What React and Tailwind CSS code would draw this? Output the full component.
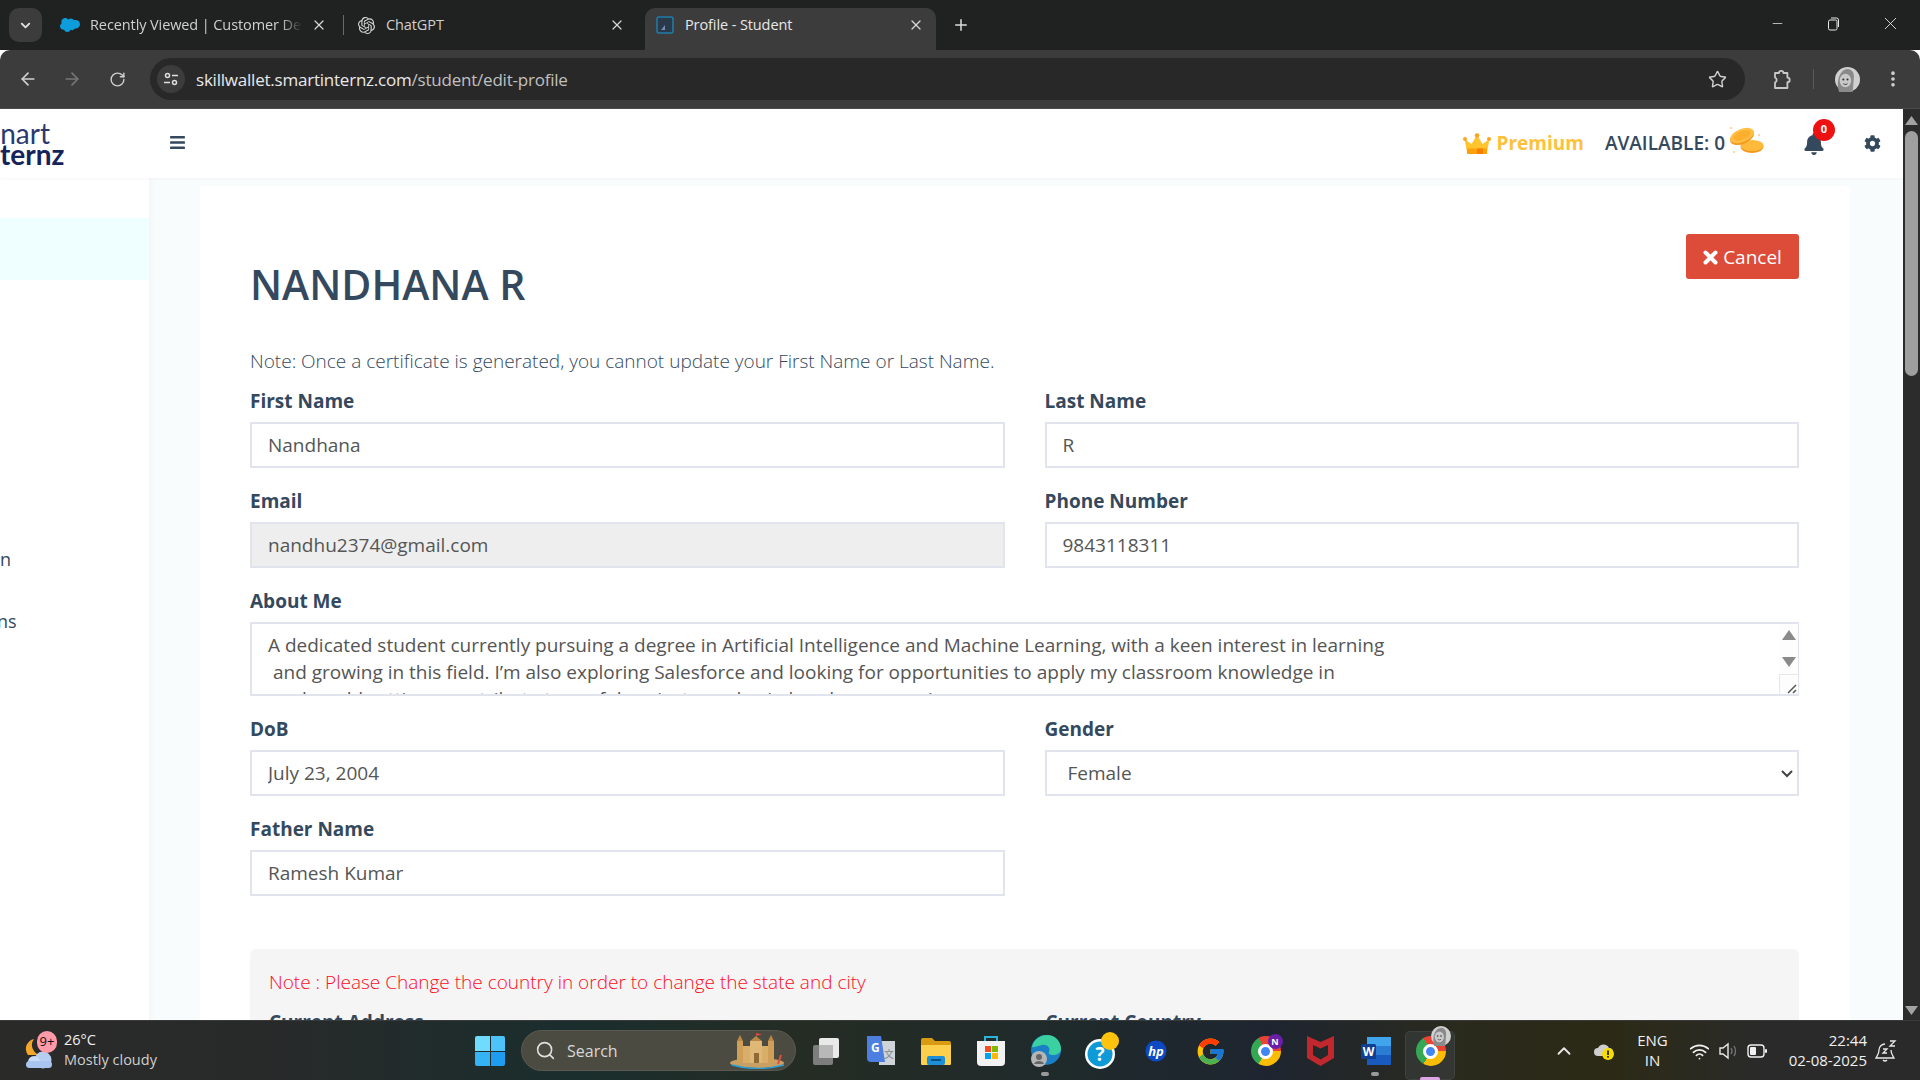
import React from "react";
import { FaBars, FaBell, FaCog } from "react-icons/fa";
import { FcGoogle } from "react-icons/fc";
import { SiOpenai, SiSalesforce } from "react-icons/si";
import { ArrowLeft, ArrowRight, RotateCw, Star, EllipsisVertical, X, Plus, ChevronDown, ChevronUp, Search, Wifi, Minus } from "lucide-react";

const Avatar = ({ s = 24 }) => (
  <svg width={s} height={s} viewBox="0 0 24 24">
    <circle cx="12" cy="12" r="12" fill="#d0d0d0" />
    <path d="M4 24C1 14 4 3 12 2c5 0 7 5 6 10l-1 12z" fill="#8a8a8a" />
    <ellipse cx="10" cy="13" rx="5.5" ry="6.5" fill="#c9c9c9" />
    <circle cx="8" cy="12" r="1" fill="#333" />
    <circle cx="12" cy="12" r="1" fill="#333" />
    <path d="M8 16q2 1.5 4 0" stroke="#555" fill="none" />
  </svg>
);

const Tab = ({ icon, text, active, w, fade, pl, gap, pr }) => (
  <div className={`flex items-center shrink-0 h-[42px] pb-[8px] mt-[8px] ${w} ${pl} ${pr} ${active ? "bg-[#3c3c3c] rounded-t-[10px]" : ""}`}>
    <span className="w-[20px] h-[20px] flex items-center justify-center shrink-0">{icon}</span>
    <span className={`ml-[10px] flex-1 min-w-0 overflow-hidden whitespace-nowrap text-[14.5px] tracking-[-0.1px] ${active ? "text-[#e8e8e8]" : "text-[#cfcfcf]"} ${fade ? "[mask-image:linear-gradient(to_right,black_90%,transparent)]" : ""}`}>{text}</span>
    <X size={16} className={`text-[#d8d8d8] shrink-0 ${gap}`} strokeWidth={1.8} />
  </div>
);

const TabStrip = () => (
  <div className="h-[50px] bg-[#202221] flex items-start shrink-0">
    <div className="ml-[9px] mt-[8px] w-[33px] h-[34px] rounded-[10px] bg-[#3c3c3c] flex items-center justify-center">
      <ChevronDown size={15} strokeWidth={3} className="text-[#e0e0e0]" />
    </div>
    <div className="ml-[5px] w-[296px] shrink-0"><Tab w="w-[296px]" pl="pl-[13px]" pr="pr-[16px]" gap="ml-[9px]" fade text="Recently Viewed | Customer De" icon={<SiSalesforce size={20} className="text-[#0d9dda]" />} /></div>
    <div className="w-[1px] h-[20px] mt-[15px] bg-[#6a6a6a] shrink-0" />
    <Tab w="w-[301px]" pl="pl-[12px]" pr="pr-[20px]" gap="ml-[6px]" text="ChatGPT" icon={<SiOpenai size={17} className="text-[#d8d8d8]" />} />
    <Tab active w="w-[291px]" pl="pl-[10px]" pr="pr-[12px]" gap="ml-[6px]" text="Profile - Student" icon={
      <svg width="20" height="20" viewBox="0 0 20 20"><rect x="2" y="2" width="16" height="16" rx="2" fill="#2b3a4a" stroke="#1f7ea8" strokeWidth="1.5" /><path d="M6 15l4-5v5z" fill="#6f8fae" /></svg>
    } />
    <Plus size={18} className="text-[#dcdcdc] ml-[16px] mt-[16px] shrink-0" strokeWidth={2} />
    <div className="flex-1" />
    <div className="flex items-center text-[#e8e8e8] h-[50px] pb-[3px] pr-[19px]">
      <Minus size={15} strokeWidth={1.2} />
      <svg width="13" height="14" viewBox="0 0 13 14" className="ml-[42px]" fill="none" stroke="#e8e8e8"><rect x="1.5" y="3" width="8.5" height="10" rx="1.5" /><path d="M4 1h5.5a2 2 0 0 1 2 2v7" /></svg>
      <X size={21} strokeWidth={1} className="ml-[40px]" />
    </div>
  </div>
);

const ToolBar = () => (
  <div className="h-[59px] bg-[#3c3c3c] rounded-t-[10px] flex items-center shrink-0 border-b border-[#4a4a4a]">
    <ArrowLeft size={20} className="ml-[18px] text-[#d0d0d0]" strokeWidth={2} />
    <ArrowRight size={20} className="ml-[24px] text-[#777]" strokeWidth={2} />
    <RotateCw size={17} className="ml-[27px] text-[#d0d0d0]" strokeWidth={2} />
    <div className="ml-[24px] w-[1595px] h-[42px] bg-[#282828] rounded-full flex items-center pl-[7px] pr-[18px]">
      <div className="w-[28px] h-[28px] rounded-full bg-[#3c3c3c] flex items-center justify-center">
        <svg width="16" height="16" viewBox="0 0 16 16" fill="none" stroke="#dedede" strokeWidth="1.5"><circle cx="4.5" cy="4.5" r="2" /><path d="M9 4.5h6M1 11.5h6" /><circle cx="11.5" cy="11.5" r="2" /></svg>
      </div>
      <span className="ml-[11px] mt-[1px] text-[17px] tracking-[-0.22px] text-[#e8e8e8]">skillwallet.smartinternz.com<span className="text-[#c0c0c0]">/student/edit-profile</span></span>
      <Star size={19} className="ml-auto text-[#d0d0d0]" strokeWidth={1.8} />
    </div>
    <svg width="24" height="24" viewBox="0 0 24 24" fill="none" stroke="#c8c8c8" strokeWidth="1.8" strokeLinejoin="round" className="ml-[24px]">
      <path d="M6 6h4a2.2 2.2 0 0 1 4.4 0h4v4.6a2.3 2.3 0 0 1 0 4.6V21H6v-5.5a2.7 2.7 0 0 0 0-5z" />
    </svg>
    <div className="ml-[20px] w-[1px] h-[20px] bg-[#5a5a5a]" />
    <div className="ml-[21px]"><Avatar s={25} /></div>
    <EllipsisVertical size={20} className="ml-[23px] text-[#d0d0d0]" strokeWidth={2.4} />
  </div>
);

const Crown = () => (
  <svg width="28" height="22" viewBox="0 0 28 22">
    <path d="M4 19L1.5 6l7 5L14 2l5.5 9 7-5L24 19z" fill="#ffc52f" />
    <path d="M4 15.5h20L24 21H4z" fill="#ff9f0a" />
    <path d="M14 15.5h6V21h-6z" fill="#f77f00" />
    <circle cx="2" cy="6" r="2" fill="#ffa41c" /><circle cx="14" cy="2.5" r="2.3" fill="#ffa41c" /><circle cx="26" cy="6" r="2" fill="#ffa41c" />
  </svg>
);

const Coins = () => (
  <svg width="36" height="30" viewBox="0 0 36 30">
    <ellipse cx="24" cy="21" rx="11.5" ry="6" fill="#f29a1f" />
    <ellipse cx="24" cy="19.5" rx="11.5" ry="5.5" fill="#ffb93b" />
    <ellipse cx="14" cy="11" rx="12.5" ry="7" transform="rotate(-22 14 11)" fill="#f29a1f" />
    <ellipse cx="14" cy="9.5" rx="12.5" ry="6.5" transform="rotate(-22 14 9.5)" fill="#ffbf45" />
    <ellipse cx="14" cy="9.5" rx="9" ry="4.2" transform="rotate(-22 14 9.5)" fill="#fdae2d" />
    <circle cx="3" cy="2" r="1" fill="#f8c98a" /><circle cx="31" cy="9" r="1" fill="#f8c98a" /><circle cx="6" cy="26" r="1" fill="#f8c98a" />
  </svg>
);

const Header = () => (
  <div className="h-[69px] bg-white flex items-center shrink-0 relative z-10 shadow-[0_1px_3px_rgba(0,0,0,0.03)]">
    <div className="w-[64px] shrink-0 overflow-hidden font-['Lato',sans-serif] text-[#16235a] text-[28px] leading-[21px] text-right">
      <div className="font-normal text-[#2a3a70] pr-[14px]">nart</div>
      <div className="font-bold">ternz</div>
    </div>
    <FaBars size={17} className="ml-[105px] text-[#34495e] -mt-[3px]" />
    <div className="flex-1" />
    <Crown />
    <span className="ml-[6px] text-[19px] font-bold text-[#fdc13c] font-['Open_Sans',sans-serif]">Premium</span>
    <span className="ml-[21px] text-[19px] font-semibold text-[#34495e] font-['Open_Sans',sans-serif]">AVAILABLE: 0</span>
    <span className="ml-[3px] -mt-[5px]"><Coins /></span>
    <span className="ml-[39px] relative">
      <FaBell size={22} className="text-[#34495e]" />
      <span className="absolute -top-[14px] left-[10px] w-[22px] h-[22px] rounded-full bg-[#ee1111] text-white text-[11px] font-bold flex items-center justify-center font-['Open_Sans',sans-serif]">0</span>
    </span>
    <FaCog size={17} className="ml-[39px] mr-[22px] text-[#34495e]" />
  </div>
);

const inputBase = "w-full h-[46px] border-2 border-[#e1e4ec] pl-[16px] text-[19px] text-[#555] outline-none";

const Label = ({ children }) => (
  <div className="h-[32px] text-[19px] leading-[23px] font-bold text-[#34495e]">{children}</div>
);

const Field = ({ label, value, disabled }) => (
  <div className="mb-[22px]">
    <Label>{label}</Label>
    <input readOnly defaultValue={value} className={`${inputBase} ${disabled ? "bg-[#eeeeee]" : "bg-white"}`} />
  </div>
);

const about = "A dedicated student currently pursuing a degree in Artificial Intelligence and Machine Learning, with a keen interest in learning\n and growing in this field. I’m also exploring Salesforce and looking for opportunities to apply my classroom knowledge in\n real-world settings, contribute to useful projects, and gain hands-on experience.";

const Card = () => (
  <div className="ml-[51px] mt-[8px] w-[1650px] bg-white px-[50px] font-['Open_Sans',sans-serif] pb-[40px]">
    <div className="flex justify-between items-start pt-[48px] h-[148px] w-[1549px]">
      <h1 className="text-[41px] leading-[56px] mt-[22px] font-semibold text-[#34495e]">NANDHANA R</h1>
      <button className="w-[113px] h-[45px] pt-[1px] bg-[#dd4b39] rounded-[3px] text-white text-[19px] flex items-center justify-center">
        <svg width="15" height="15" viewBox="0 0 15 15" className="mr-[5px] mt-[1px]"><path d="M2.5 2.5l10 10M12.5 2.5l-10 10" stroke="#fff" strokeWidth="4" strokeLinecap="round" /></svg>Cancel
      </button>
    </div>
    <p className="text-[19px] leading-[26px] font-light text-[#34495e] mt-[14px] h-[42px]">Note: Once a certificate is generated, you cannot update your First Name or Last Name.</p>
    <div className="grid grid-cols-2 gap-x-[40px] w-[1549px]">
      <Field label="First Name" value="Nandhana" />
      <Field label="Last Name" value="R" />
      <Field label="Email" value="nandhu2374@gmail.com" disabled />
      <Field label="Phone Number" value="9843118311" />
      <div className="col-span-2 mb-[22px]">
        <Label>About Me</Label>
        <div className="relative h-[74px]">
          <textarea readOnly defaultValue={about} className="w-full h-full block resize-none overflow-hidden border-2 border-[#e1e4ec] pl-[16px] pt-[8px] text-[19px] leading-[27px] text-[#555] outline-none whitespace-pre" />
          <div className="absolute right-[1px] top-[2px] bottom-[2px] w-[19px] bg-[#fdfdfd] flex flex-col items-center">
            <svg width="14" height="10" viewBox="0 0 14 10" className="mt-[6px]"><path d="M7 0l7 10H0z" fill="#8a8a8a" /></svg>
            <svg width="14" height="10" viewBox="0 0 14 10" className="mt-[17px]"><path d="M0 0h14L7 10z" fill="#8a8a8a" /></svg>
            <div className="mt-auto w-[19px] h-[20px] border-t border-l border-[#e8e8e8] flex items-end justify-end">
              <svg width="11" height="11" viewBox="0 0 11 11" stroke="#555" strokeWidth="1.5"><path d="M1 10L9 2M6 10l3-3" /></svg>
            </div>
          </div>
        </div>
      </div>
      <Field label="DoB" value="July 23, 2004" />
      <div className="mb-[22px]">
        <Label>Gender</Label>
        <div className="relative">
          <select defaultValue="Female" className="w-full h-[46px] border-2 border-[#e1e4ec] pl-[21px] text-[19px] text-[#555] outline-none bg-white appearance-none">
            <option>Female</option>
            <option>Male</option>
          </select>
          <svg width="12" height="8" viewBox="0 0 12 8" fill="none" stroke="#444" strokeWidth="2" className="absolute right-[6px] top-[20px] pointer-events-none"><path d="M1 1l5 5 5-5" /></svg>
        </div>
      </div>
      <Field label="Father Name" value="Ramesh Kumar" />
    </div>
    <div className="mt-[31px] w-[1549px] bg-[#f5f5f5] rounded-[6px] px-[19px] pt-[20px] h-[200px]">
      <p className="text-[19px] leading-[26px] font-light text-[#ff0d1d]">Note : Please Change the country in order to change the state and city</p>
      <div className="grid grid-cols-2 gap-x-[40px] mt-[13px] text-[19px] font-bold text-[#34495e]">
        <div>Current Address</div>
        <div className="pl-[1px]">Current Country</div>
      </div>
    </div>
  </div>
);

const Sidebar = () => (
  <div className="w-[149px] shrink-0 bg-white pt-[40px] font-['Open_Sans',sans-serif] text-[18px] text-[#34495e]">
    <div className="h-[62px] bg-[#effeff]" />
    <div className="h-[248px]" />
    <div className="h-[62px] leading-[62px]">n</div>
    <div className="h-[62px] leading-[62px] -translate-x-[3px] overflow-hidden">ns</div>
  </div>
);

const Scrollbar = () => (
  <div className="w-[17px] shrink-0 bg-[#2c2c2c] flex flex-col items-center pt-[7px] relative z-20">
    <svg width="13" height="9" viewBox="0 0 13 9"><path d="M6.5 0L13 9H0z" fill="#a3a3a3" /></svg>
    <div className="mt-[6px] w-[13px] h-[245px] rounded-full bg-[#9f9f9f]" />
    <div className="flex-1" />
    <svg width="13" height="9" viewBox="0 0 13 9" className="mb-[5px]"><path d="M0 0h13L6.5 9z" fill="#a3a3a3" /></svg>
  </div>
);

const ChromeIcon = ({ children }) => (
  <span className="relative w-[30px] h-[30px] rounded-full bg-[conic-gradient(#ea4335_-30deg,#ea4335_90deg,#fbbc04_90deg,#fbbc04_210deg,#34a853_210deg,#34a853_330deg,#ea4335_330deg)] flex items-center justify-center">
    <span className="w-[15px] h-[15px] rounded-full bg-[#4285f4] border-[3px] border-white" />
    {children}
  </span>
);

const Cell = ({ children, dot }) => (
  <div className="w-[55px] h-[60px] shrink-0 flex items-center justify-center relative">
    {children}
    {dot && <span className="absolute bottom-[5px] left-[23px] w-[8px] h-[4px] rounded-full bg-[#9a9a9a]" />}
  </div>
);

const TaskIcons = () => (
  <div className="flex ml-[2px]">
    <Cell>
      <svg width="30" height="30" viewBox="0 0 30 30"><rect x="8" y="2" width="20" height="20" rx="2" fill="#e9e9e9" /><rect x="2" y="9" width="20" height="20" rx="2" fill="#7d7d7d" /><rect x="8" y="9" width="14" height="13" fill="#b8b8b8" /></svg>
    </Cell>
    <Cell>
      <svg width="30" height="32" viewBox="0 0 30 32"><path d="M13 6h16v24H13z" fill="#cfd4d9" /><path d="M1 1h14l4 26H5a4 4 0 0 1-4-4z" fill="#4d7fe0" /><text x="5" y="17" fill="#fff" fontSize="12" fontWeight="700" fontFamily="Open Sans">G</text><text x="18" y="23" fill="#7b8790" fontSize="10" fontFamily="Noto Sans CJK SC">文</text></svg>
    </Cell>
    <Cell>
      <svg width="30" height="30" viewBox="0 0 30 30"><path d="M0 4a2 2 0 0 1 2-2h9l3 3h14a2 2 0 0 1 2 2v3H0z" fill="#d99b12" /><path d="M0 9h30v19a1 1 0 0 1-1 1H1a1 1 0 0 1-1-1z" fill="#fcd04c" /><rect x="6" y="20" width="18" height="9" rx="2" fill="#1c8fd6" /><rect x="10" y="23" width="10" height="2" fill="#0b4f86" /></svg>
    </Cell>
    <Cell>
      <svg width="30" height="32" viewBox="0 0 30 32"><path d="M9 6V2h12v4" fill="none" stroke="#2bb3d9" strokeWidth="2" /><path d="M1 6h28v21a4 4 0 0 1-4 4H5a4 4 0 0 1-4-4z" fill="#f2f2f2" /><rect x="9" y="11" width="6" height="6" fill="#f25022" /><rect x="16" y="11" width="6" height="6" fill="#7fba00" /><rect x="9" y="18" width="6" height="6" fill="#00a4ef" /><rect x="16" y="18" width="6" height="6" fill="#ffb900" /></svg>
    </Cell>
    <Cell dot>
      <svg width="32" height="34" viewBox="0 0 32 34"><circle cx="16" cy="16" r="15" fill="#1a7fc4" /><path d="M2 13C4 4 12 1 17 1c8 0 14 6 14 14 0 4-4 6-8 6-3 0-5-1-4-3 2-4-2-8-7-7-5 1-9 3-10 2z" fill="#3ad0a0" /><circle cx="9" cy="25" r="8" fill="#b5b5b5" /><circle cx="9" cy="23" r="3" fill="#666" /><path d="M4 30c1-4 9-4 10 0z" fill="#666" /></svg>
    </Cell>
    <Cell>
      <svg width="36" height="38" viewBox="0 0 36 38" className="ml-[4px]"><circle cx="15" cy="22" r="15" fill="#fff" /><circle cx="15" cy="22" r="12.5" fill="#0e9ad6" /><text x="15" y="29" textAnchor="middle" fill="#fff" fontSize="19" fontWeight="700" fontFamily="Open Sans">?</text><circle cx="25" cy="9" r="9" fill="#ffc30d" /></svg>
    </Cell>
    <Cell>
      <svg width="22" height="22" viewBox="0 0 22 22"><circle cx="11" cy="11" r="10.5" fill="#0c49c2" /><text x="11" y="15.5" textAnchor="middle" fill="#fff" fontSize="13" fontStyle="italic" fontWeight="700" fontFamily="Open Sans">hp</text></svg>
    </Cell>
    <Cell><FcGoogle size={31} /></Cell>
    <Cell>
      <ChromeIcon><span className="absolute -top-[2px] -right-[2px] w-[15px] h-[15px] rounded-full bg-[#6a1fa8] text-white text-[9px] font-bold flex items-center justify-center">N</span></ChromeIcon>
    </Cell>
    <Cell>
      <svg width="27" height="30" viewBox="0 0 27 30"><path d="M0 0l13.5 6L27 0v22l-13.5 8L0 22z" fill="#c0282d" /><path d="M6 9l7.5 3.5L21 9v10l-7.5 4.5L6 19z" fill="#202a2b" /></svg>
    </Cell>
    <Cell dot>
      <svg width="30" height="30" viewBox="0 0 30 30"><rect x="6" y="1" width="24" height="9" fill="#41a5ee" /><rect x="6" y="10" width="24" height="9" fill="#2b7cd3" /><rect x="6" y="19" width="24" height="10" fill="#185abd" /><rect x="0" y="8" width="15" height="15" rx="1.5" fill="#103f91" /><text x="7.5" y="20" textAnchor="middle" fill="#fff" fontSize="12" fontWeight="700" fontFamily="Open Sans">W</text></svg>
    </Cell>
    <div className="w-[55px] h-[60px] shrink-0 relative flex items-center justify-center">
      <div className="absolute left-[2px] top-[10px] w-[50px] h-[49px] rounded-[5px] bg-[#3a403f]/60 border border-[#4a4f4e]/50" />
      <span className="absolute bottom-[0px] left-[17px] w-[20px] h-[4px] rounded-full bg-[#dca5e4]" />
      <span className="relative"><ChromeIcon><span className="absolute -top-[10px] -right-[5px]"><Avatar s={20} /></span></ChromeIcon></span>
    </div>
  </div>
);

const Castle = () => (
  <svg width="56" height="36" viewBox="0 0 56 36">
    <ellipse cx="27" cy="30" rx="27" ry="5" fill="#c9a063" />
    <path d="M2 32q25 7 52 0" fill="none" stroke="#2a9fd6" strokeWidth="1.5" />
    <rect x="9" y="13" width="34" height="17" fill="#d8ae68" />
    <rect x="7" y="8" width="6" height="22" fill="#cf9f58" />
    <rect x="38" y="8" width="6" height="22" fill="#cf9f58" />
    <rect x="20" y="8" width="12" height="22" fill="#dfb877" />
    <path d="M7 8l3-6 3 6zM38 8l3-6 3 6zM20 8l6-5 6 5z" fill="#b98845" />
    <path d="M26 3V0l6 1.5-6 1.5" fill="#e04b3a" />
    <rect x="24" y="20" width="5" height="10" fill="#8f6a34" />
    <path d="M48 31l3-9" stroke="#e0503d" strokeWidth="2" />
  </svg>
);

const Taskbar = () => (
  <div className="h-[60px] shrink-0 flex items-start text-white font-['Open_Sans',sans-serif] border-t border-[#3a3a3a] bg-[linear-gradient(90deg,#2a2a29_0%,#282a2a_14%,#1a2e2d_30%,#252c24_42%,#1f2a2c_56%,#1e2530_66%,#2a2a1d_76%,#2c2a16_84%,#2a2a2a_92%,#2a2a2a_100%)] relative z-30">
    <div className="w-[475px] shrink-0 flex items-center h-[60px] pl-[22px] relative">
      <div className="relative w-[36px] h-[38px] mt-[2px]">
        <svg width="34" height="34" viewBox="0 0 34 34" className="absolute left-[2px] top-[4px]"><path d="M10 2a10 10 0 0 0 8 16H4A10 10 0 0 1 10 2z" fill="#f4a62a" /><circle cx="19" cy="23" r="8.5" fill="#b6cef0" /><circle cx="10" cy="25" r="6" fill="#c8dcf8" /><rect x="2" y="24" width="26" height="7" rx="3.5" fill="#a9c4ee" /></svg>
        <span className="absolute left-[15px] -top-[2px] w-[20px] h-[22px] rounded-full bg-[#ff9aa8] text-[#111] text-[13px] flex items-center justify-center">9+</span>
      </div>
      <div className="ml-[6px] -mt-[2px] text-[14.5px] leading-[20px]">
        <div className="text-[#f0f0f0]">26°C</div>
        <div className="text-[#cfcfcf]">Mostly cloudy</div>
      </div>
    </div>
    <div className="mt-[15px] w-[30px] h-[30px] grid grid-cols-2 grid-rows-2 gap-[1px] shrink-0">
      <span className="bg-[#6fdcff] rounded-tl-[2px]" /><span className="bg-[#4cc4fb] rounded-tr-[2px]" />
      <span className="bg-[#35b4f5] rounded-bl-[2px]" /><span className="bg-[#1e9cf0] rounded-br-[2px]" />
    </div>
    <div className="ml-[16px] mt-[9px] w-[275px] h-[41px] rounded-full bg-[#4b4b42] border border-[#5a5a52] flex items-center pl-[13px] shrink-0">
      <Search size={21} strokeWidth={1.8} className="text-[#e0e0e0]" />
      <span className="ml-[11px] text-[16px] text-[#d8d8d8]">Search</span>
      <span className="ml-auto mr-[9px]"><Castle /></span>
    </div>
    <TaskIcons />
    <div className="flex-1 flex items-center h-[60px] justify-end pr-[23px]">
      <ChevronUp size={22} strokeWidth={2} className="text-[#e8e8e8] mr-[18px]" />
      <svg width="22" height="20" viewBox="0 0 22 20" className="mr-[22px]"><path d="M5 15a4 4 0 0 1 0-8 6 6 0 0 1 11 0 4 4 0 0 1 0 8z" fill="#cfcfcf" /><circle cx="15" cy="13" r="6" fill="#f7dc00" /><rect x="14.2" y="9.5" width="1.6" height="4.5" fill="#111" /><rect x="14.2" y="15" width="1.6" height="1.6" fill="#111" /></svg>
      <div className="text-[15px] leading-[20px] text-center text-[#f0f0f0] mr-[21px] -mt-[3px]">ENG<br />IN</div>
      <Wifi size={21} strokeWidth={2} className="text-[#f0f0f0] mr-[9px]" />
      <svg width="20" height="18" viewBox="0 0 20 18" fill="none" className="mr-[8px]"><path d="M1 6h3l5-4v14l-5-4H1z" stroke="#e8e8e8" strokeWidth="1.4" /><path d="M12 6q2 3 0 6M15 4q3 5 0 10" stroke="#777" strokeWidth="1.3" /></svg>
      <svg width="20" height="14" viewBox="0 0 20 14" fill="none" className="mr-[22px]"><rect x="1" y="1" width="16" height="12" rx="3" stroke="#f0f0f0" strokeWidth="1.4" /><rect x="3" y="3" width="6" height="8" rx="1" fill="#f0f0f0" /><rect x="18" y="5" width="2" height="4" rx="1" fill="#f0f0f0" /></svg>
      <div className="text-[15px] leading-[20px] text-right text-[#f0f0f0] -mt-[2px]">22:44<br />02-08-2025</div>
      <svg width="22" height="22" viewBox="0 0 22 22" fill="none" stroke="#e8e8e8" strokeWidth="1.3" className="ml-[8px]"><path d="M10 4a6 6 0 0 0-6 6c0 4-2 6-3 8h18c-1-2-3-4-3-8" /><path d="M8 20q2 2 4 0" /><path d="M8 9h4l-4 4h4" /><path d="M15 1h5l-5 5h5" /></svg>
    </div>
  </div>
);

export default function App() {
  return (
    <div className="w-[1920px] h-[1080px] overflow-hidden flex flex-col bg-white font-['Open_Sans',sans-serif]">
      <TabStrip />
      <ToolBar />
      <div className="flex-1 flex min-h-0 overflow-hidden">
        <div className="flex-1 min-w-0 flex flex-col overflow-hidden">
          <Header />
          <div className="flex-1 flex min-h-0 overflow-hidden">
            <Sidebar />
            <div className="flex-1 bg-[#f8fcfd] overflow-hidden shadow-[inset_8px_0_8px_-8px_rgba(0,0,0,0.05)]">
              <Card />
            </div>
          </div>
        </div>
        <Scrollbar />
      </div>
      <Taskbar />
    </div>
  );
}
